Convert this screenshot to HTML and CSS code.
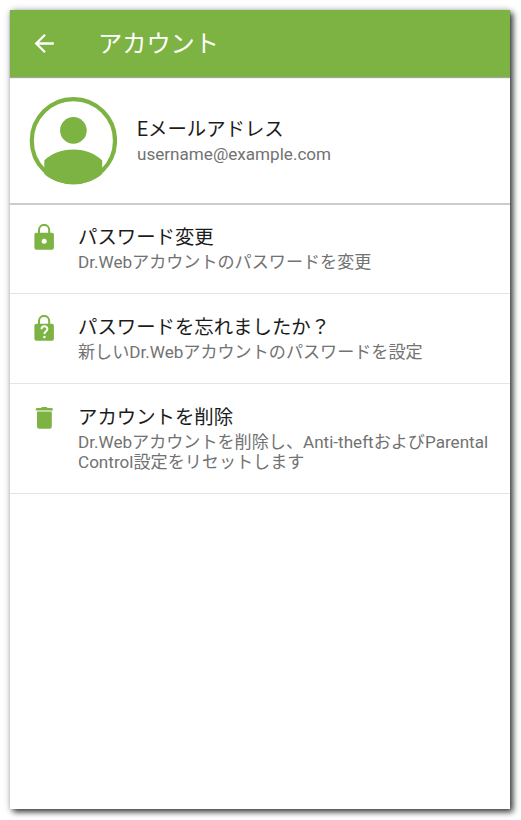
FILE: index.html
```html
<!DOCTYPE html>
<html lang="ja">
<head>
  <meta charset="UTF-8" />
  <meta name="viewport" content="width=device-width, initial-scale=1.0" />
  <title>アカウント</title>
  <link rel="stylesheet" href="styles.css">
</head>
<body>
  <div class="screen">
    <header>
      <a class="back" href="#" aria-label="戻る">
        <svg width="20" height="20" viewBox="0 0 20 20">
          <path d="M19.8 9.5H2.5M11 .8 2.2 9.5l8.8 8.7" fill="none" stroke="currentColor" stroke-width="2.3" />
        </svg>
      </a>
      <h1>アカウント</h1>
    </header>

    <section class="profile">
      <svg class="avatar" width="88" height="88" viewBox="0 0 88 88">
        <circle cx="44.4" cy="43.7" r="41.6" fill="none" stroke="currentColor" stroke-width="4.2" />
        <circle cx="44.4" cy="33.4" r="13.3" fill="currentColor" />
        <path d="M15.3 63.5C22 56.5 32 52.4 44.4 52.4S66 56.5 73.2 63.5V77C65 84 55 87 44.4 87S23 84 15.3 77Z" fill="currentColor" />
      </svg>
      <div class="text">
        <h2>Eメールアドレス</h2>
        <p>username@example.com</p>
      </div>
    </section>

    <ul class="actions">
      <li>
        <svg class="icon" width="20" height="26" viewBox="0 0 20 26">
          <path d="M5 10V6a5.1 5.1 0 0 1 10.2 0v4" fill="none" stroke="currentColor" stroke-width="2" />
          <rect x="0.4" y="8.7" width="19.5" height="17" rx="2" fill="currentColor" />
          <circle cx="10.2" cy="17.2" r="2.5" fill="#fff" />
        </svg>
        <div class="text">
          <h2>パスワード変更</h2>
          <p>Dr.Webアカウントのパスワードを変更</p>
        </div>
      </li>
      <li>
        <svg class="icon" width="20" height="26" viewBox="0 0 20 26">
          <path d="M5 10V6a5.1 5.1 0 0 1 10.2 0v4" fill="none" stroke="currentColor" stroke-width="2" />
          <rect x="0.4" y="8.7" width="19.5" height="17" rx="2" fill="currentColor" />
          <path d="M7.5 14.2c0-3.9 5.9-3.8 5.9-.3 0 2.3-3 2.4-3 5.2" fill="none" stroke="#fff" stroke-width="2" />
          <circle cx="10.4" cy="22" r="1.3" fill="#fff" />
        </svg>
        <div class="text">
          <h2>パスワードを忘れましたか？</h2>
          <p>新しいDr.Webアカウントのパスワードを設定</p>
        </div>
      </li>
      <li>
        <svg class="icon" width="20" height="26" viewBox="0 0 20 26">
          <path d="M1.8 5.4V3.8l1.1-.9H7l1-1h4.6l1 1h4.1l1.1.9v1.6z" fill="currentColor" />
          <path d="M3 6.6h14.8v15a2.2 2.2 0 0 1-2.2 2.2H5.2A2.2 2.2 0 0 1 3 21.6z" fill="currentColor" />
        </svg>
        <div class="text">
          <h2>アカウントを削除</h2>
          <p>Dr.Webアカウントを削除し、Anti-theftおよびParental Control設定をリセットします</p>
        </div>
      </li>
    </ul>
  </div>
</body>
</html>
```

FILE: styles.css
```css
* {
  box-sizing: border-box;
  margin: 0;
  padding: 0;
}

body {
  font-family: Roboto, "Noto Sans CJK JP", sans-serif;
  background-color: #fff;
  color: #1c1c1c;
  padding: 10px;
  height: 820px;
  overflow: hidden;
}

.screen {
  width: 500px;
  height: 799px;
  background-color: #fff;
  box-shadow: 0 0 7px rgba(0, 0, 0, 0.2), 3px 3px 6px rgba(0, 0, 0, 0.75);
}

header {
  display: flex;
  align-items: center;
  height: 67px;
  padding-left: 24px;
  background-color: #7cb342;
  color: #fff;
  box-shadow: 0 1px 1px rgba(0, 0, 0, 0.35);
}

.back {
  display: flex;
  width: 64px;
  color: #fff;
}

h1 {
  font-size: 24.2px;
  font-weight: 400;
  line-height: 32px;
}

.profile {
  display: flex;
  height: 128px;
  padding: 20px 19px 0;
  border-bottom: 2px solid #ccc;
}

.avatar {
  flex: none;
  margin-right: 20px;
  color: #7cb342;
}

.profile .text {
  padding-top: 20px;
}

h2 {
  font-size: 19.4px;
  font-weight: 400;
  line-height: 26px;
  height: 27px;
}

p {
  font-size: 17.1px;
  line-height: 20px;
  color: #727272;
}

.actions {
  list-style: none;
}

.actions li {
  display: flex;
  min-height: 90px;
  padding: 21px 16px 0 24px;
  border-bottom: 1px solid #e4e4e4;
}

.actions li:first-child {
  min-height: 89px;
  padding-top: 20px;
}

.actions li:last-child {
  min-height: 110px;
}

.icon {
  flex: none;
  margin-right: 24px;
  color: #7cb342;
}

.actions li:first-child .icon {
  margin-top: -1px;
}
```
